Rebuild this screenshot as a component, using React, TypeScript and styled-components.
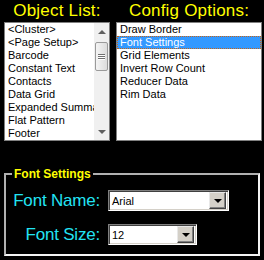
import styled, { createGlobalStyle } from "styled-components";

const GlobalStyle = createGlobalStyle`
  html, body {
    margin: 0;
    padding: 0;
    background: #000;
  }
  body {
    font-family: "Liberation Sans", Arial, sans-serif;
  }
`;

const Screen = styled.div`
  width: 264px;
  height: 260px;
  box-sizing: border-box;
  padding: 0 2px 0 4px;
  background: #000;
  display: flex;
  flex-direction: column;
`;

const Columns = styled.div`
  display: grid;
  grid-template-columns: 106px 146px;
  column-gap: 6px;
`;

const Title = styled.div`
  height: 22px;
  line-height: 21px;
  font-size: 17px;
  letter-spacing: 0.2px;
  color: #ffff00;
  text-align: center;
  white-space: nowrap;
`;

const ListBox = styled.div`
  height: 119px;
  box-sizing: border-box;
  border: 1px solid #808080;
  background: #fff;
  display: flex;
  overflow: hidden;
`;

const Items = styled.ul`
  flex: 1;
  min-width: 0;
  margin: 0;
  padding: 0;
  list-style: none;
`;

const Item = styled.li<{ $selected?: boolean }>`
  height: 13px;
  line-height: 13px;
  font-size: 11px;
  padding-left: 3px;
  white-space: nowrap;
  overflow: hidden;
  box-sizing: border-box;
  color: ${(p) => (p.$selected ? "#fff" : "#000")};
  background: ${(p) => (p.$selected ? "#3399ff" : "transparent")};
  outline: ${(p) => (p.$selected ? "1px dotted #c86414" : "none")};
  outline-offset: -1px;
`;

const Scrollbar = styled.div`
  width: 15px;
  background: #f0f0f0;
  display: flex;
  flex-direction: column;
  align-items: center;
`;

const ArrowButton = styled.div<{ $down?: boolean }>`
  height: 17px;
  width: 15px;
  display: flex;
  align-items: center;
  justify-content: center;
  &::after {
    content: "";
    width: 0;
    height: 0;
    border-left: 4px solid transparent;
    border-right: 4px solid transparent;
    ${(p) =>
      p.$down
        ? "border-top: 4px solid #606060;"
        : "border-bottom: 4px solid #606060;"}
  }
`;

const Thumb = styled.div`
  margin-top: 2px;
  width: 13px;
  height: 29px;
  box-sizing: border-box;
  border: 1px solid #9a9a9a;
  border-radius: 2px;
  background: linear-gradient(to right, #f4f4f4, #dcdcdc);
  display: flex;
  flex-direction: column;
  align-items: center;
  justify-content: center;
  gap: 1px;
`;

const Grip = styled.div`
  width: 7px;
  height: 1px;
  background: #707070;
  box-shadow: 0 1px 0 #fff;
`;

const Spacer = styled.div`
  flex: 1;
`;

const GroupBox = styled.fieldset`
  margin: 27px 2px 0 0;
  padding: 10px 0 9px 0;
  min-width: 0;
  border: 2px solid;
  border-color: #b0b0b0 #f4f4f4 #f4f4f4 #b0b0b0;
  display: grid;
  grid-template-columns: 94px auto;
  column-gap: 8px;
  row-gap: 13px;
  align-items: center;
`;

const Legend = styled.legend`
  margin-left: 6px;
  padding: 0 2px;
  font-size: 12px;
  line-height: 12px;
  font-weight: bold;
  color: #ffff00;
`;

const Label = styled.div`
  font-size: 17px;
  line-height: 20px;
  letter-spacing: -0.2px;
  color: #22e4f4;
  text-align: right;
  white-space: nowrap;
`;

const Select = styled.div<{ $width: number }>`
  width: ${(p) => p.$width}px;
  height: 21px;
  box-sizing: border-box;
  border: 1px solid;
  border-color: #808080 #fff #fff #808080;
  box-shadow: inset 1px 1px 0 #404040, inset -1px -1px 0 #d4d0c8;
  background: #fff;
  display: flex;
  align-items: center;
  padding: 0 2px 0 3px;
`;

const SelectText = styled.span`
  flex: 1;
  font-size: 11px;
  color: #000;
`;

const DropButton = styled.div`
  width: 17px;
  height: 17px;
  box-sizing: border-box;
  background: #d4d0c8;
  border: 1px solid;
  border-color: #e8e8e8 #404040 #404040 #e8e8e8;
  box-shadow: inset -1px -1px 0 #808080;
  display: flex;
  align-items: center;
  justify-content: center;
  &::after {
    content: "";
    width: 0;
    height: 0;
    border-left: 4px solid transparent;
    border-right: 4px solid transparent;
    border-top: 4px solid #000;
  }
`;

const objects = [
  "<Cluster>",
  "<Page Setup>",
  "Barcode",
  "Constant Text",
  "Contacts",
  "Data Grid",
  "Expanded Summary",
  "Flat Pattern",
  "Footer",
];

const options = [
  "Draw Border",
  "Font Settings",
  "Grid Elements",
  "Invert Row Count",
  "Reducer Data",
  "Rim Data",
];

export default function App() {
  return (
    <>
      <GlobalStyle />
      <Screen>
        <Columns>
          <Title>Object List:</Title>
          <Title>Config Options:</Title>
          <ListBox>
            <Items>
              {objects.map((o) => (
                <Item key={o}>{o}</Item>
              ))}
            </Items>
            <Scrollbar>
              <ArrowButton />
              <Thumb>
                <Grip />
                <Grip />
                <Grip />
              </Thumb>
              <Spacer />
              <ArrowButton $down />
            </Scrollbar>
          </ListBox>
          <ListBox>
            <Items>
              {options.map((o) => (
                <Item key={o} $selected={o === "Font Settings"}>
                  {o}
                </Item>
              ))}
            </Items>
          </ListBox>
        </Columns>
        <GroupBox>
          <Legend>Font Settings</Legend>
          <Label>Font Name:</Label>
          <Select $width={121}>
            <SelectText>Arial</SelectText>
            <DropButton />
          </Select>
          <Label>Font Size:</Label>
          <Select $width={89}>
            <SelectText>12</SelectText>
            <DropButton />
          </Select>
        </GroupBox>
      </Screen>
    </>
  );
}
